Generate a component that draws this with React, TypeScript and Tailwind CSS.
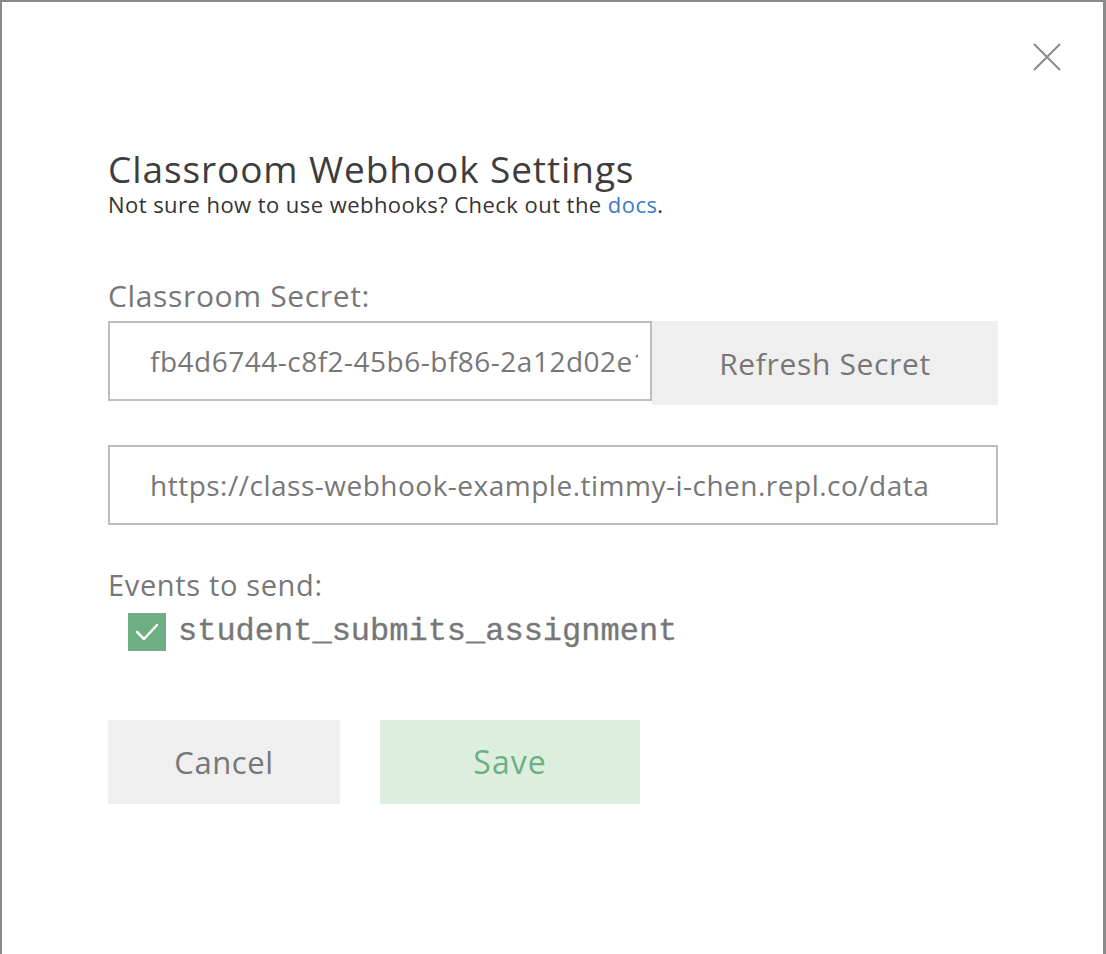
import { useState } from 'react';

export default function App() {
  const [secret] = useState('fb4d6744-c8f2-45b6-bf86-2a12d02e1c7a');
  const [url, setUrl] = useState('https://class-webhook-example.timmy-i-chen.repl.co/data');
  const [checked, setChecked] = useState(true);

  return (
    <div className="w-[1106px] h-[954px] bg-white" style={{ fontFamily: '"Open Sans", Lato, sans-serif' }}>
      <div className="relative h-full border-t-2 border-l-2 border-r-[3px] border-[#8a8a8a] bg-white">
        {/* close */}
        <button className="absolute right-[41px] top-[40px] h-[30px] w-[30px] flex items-center justify-center">
          <svg width="28" height="28" viewBox="0 0 28 28" fill="none" stroke="#8a8a8a" strokeWidth="2">
            <path d="M1 1 L27 27 M27 1 L1 27" />
          </svg>
        </button>

        <div className="pl-[106px] pt-[145px] w-[1003px]">
          {/* Header */}
          <h1 className="text-[37px] leading-[44px] tracking-[0.9px] text-[#3d3d3d]">Classroom Webhook Settings</h1>
          <p className="mt-[1px] text-[22px] leading-[24px] tracking-[0.45px] text-[#333]">
            Not sure how to use webhooks? Check out the <a className="text-[#3a7cc6]">docs</a>.
          </p>

          {/* Secret */}
          <div className="mt-[61px] text-[30px] leading-[38px] tracking-[0.65px] text-[#777]">Classroom Secret:</div>
          <div className="mt-[6px] flex">
            <input
              readOnly
              value={secret}
              className="w-[544px] h-[80px] border-2 border-[#bdbdbd] pl-[40px] pr-[12px] text-[28px] tracking-[0.5px] text-[#777] outline-none"
            />
            <button className="w-[346px] h-[84px] bg-[#efefef] text-[30px] tracking-[0.65px] text-[#777]">Refresh Secret</button>
          </div>

          {/* URL */}
          <input
            value={url}
            onChange={(e) => setUrl(e.target.value)}
            className="mt-[40px] w-[890px] h-[80px] border-2 border-[#bdbdbd] pl-[40px] pr-[12px] text-[28px] tracking-[0.5px] text-[#777] outline-none"
          />

          {/* Events */}
          <div className="mt-[42px] text-[29px] leading-[36px] tracking-[0.65px] text-[#777]">Events to send:</div>
          <label className="mt-[5px] ml-[20px] flex items-center gap-[12px] cursor-pointer">
            <span
              onClick={() => setChecked(!checked)}
              className={`h-[38px] w-[38px] flex items-center justify-center ${checked ? 'bg-[#6daf83]' : 'bg-white border-2 border-[#bdbdbd]'}`}
            >
              {checked && (
                <svg width="26" height="26" viewBox="0 0 26 26" fill="none" stroke="white" strokeWidth="2.5" strokeLinecap="round" strokeLinejoin="round">
                  <path d="M3 13 L10 20 L23 6" />
                </svg>
              )}
            </span>
            <span
              className="text-[32px] text-[#777] [-webkit-text-stroke:0.35px_#777]"
              style={{ fontFamily: '"Liberation Mono", monospace' }}
            >
              student_submits_assignment
            </span>
          </label>

          {/* Actions */}
          <div className="mt-[64px] flex gap-[40px]">
            <button className="w-[232px] h-[84px] bg-[#efefef] text-[31px] tracking-[0.6px] text-[#777]">Cancel</button>
            <button className="w-[260px] h-[84px] bg-[#dcefdf] text-[32px] tracking-[1px] text-[#6daf83]">Save</button>
          </div>
        </div>
      </div>
    </div>
  );
}
